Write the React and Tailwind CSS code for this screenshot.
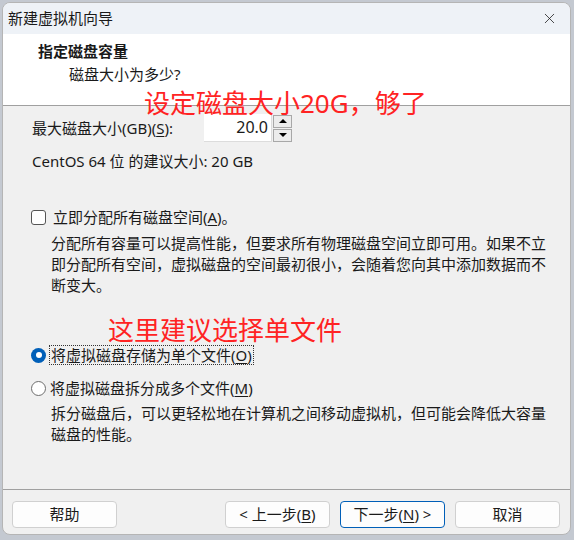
import { X } from 'lucide-react';

const U = ({ children }) => <span className="underline underline-offset-2">{children}</span>;

const Radio = ({ checked }) =>
  checked ? (
    <span className="w-[15px] h-[15px] rounded-full bg-[#005fb8] flex items-center justify-center shrink-0">
      <span className="w-[6px] h-[6px] rounded-full bg-white" />
    </span>
  ) : (
    <span className="w-[15px] h-[15px] rounded-full border border-[#6e6e6e] bg-white shrink-0" />
  );

const Btn = ({ children, primary }) => (
  <button
    className={
      primary
        ? 'w-[105px] h-[27px] rounded-[4px] border border-[#005fb8] bg-[#fdfdfd] text-[15px] text-[#1a1a1a] flex items-center justify-center'
        : 'w-[105px] h-[27px] rounded-[4px] border border-[#d0d0d0] bg-[#fdfdfd] text-[15px] text-[#1a1a1a] flex items-center justify-center'
    }
  >
    {children}
  </button>
);

export default function App() {
  return (
    <div
      className="w-[574px] h-[540px] bg-[#c4c9d1] pt-[2px] pl-[2px] overflow-hidden"
      style={{ fontFamily: '"Noto Sans", "Noto Sans CJK SC", sans-serif' }}
    >
      <div className="relative w-[569px] h-[533px] flex flex-col border border-[#b5b5b5] rounded-[8px] overflow-hidden bg-[#f0f0f0] text-[#1a1a1a]">
        {/* title bar */}
        <div className="h-[31px] bg-[#eef2f7] flex items-center justify-between pl-[5px] pr-[12px] shrink-0">
          <span className="text-[15px] leading-none">新建虚拟机向导</span>
          <X size={17} strokeWidth={1.1} className="text-[#1a1a1a]" />
        </div>

        {/* header */}
        <div className="h-[72px] bg-white border-b border-[#a0a0a0] shrink-0 pl-[35px] pt-[7px]">
          <p className="text-[15px] font-bold leading-[21px]">指定磁盘容量</p>
          <p className="text-[15px] leading-[21px] mt-[2px] pl-[31px]">磁盘大小为多少?</p>
        </div>

        {/* body */}
        <div className="flex-1 pl-[28px] pt-[8px] text-[15px] leading-[21px]">
          <div className="flex items-center h-[28px]">
            <span className="w-[173px] pl-[1px]">
              最大磁盘大小(GB)(<U>S</U>):
            </span>
            <div className="w-[68px] h-[28px] bg-white border-b border-r border-[#dcdcdc] flex items-center justify-end pr-[3px] text-[16px]">
              20.0
            </div>
            <div className="ml-[1px] flex flex-col gap-[1px]">
              <span className="w-[19px] h-[13px] border border-[#a8a8a8] bg-[#ececec] flex items-center justify-center">
                <span className="w-0 h-0 border-l-[4px] border-r-[4px] border-b-[4px] border-l-transparent border-r-transparent border-b-black" />
              </span>
              <span className="w-[19px] h-[13px] border border-[#a8a8a8] bg-[#ececec] flex items-center justify-center">
                <span className="w-0 h-0 border-l-[4px] border-r-[4px] border-t-[4px] border-l-transparent border-r-transparent border-t-black" />
              </span>
            </div>
          </div>

          <p className="mt-[9px] pl-[1px]">CentOS 64 位 的建议大小: 20 GB</p>

          <div className="flex items-center mt-[35px] gap-[7px]">
            <span className="w-[15px] h-[15px] rounded-[3px] border border-[#555] bg-white shrink-0" />
            <span>
              立即分配所有磁盘空间(<U>A</U>)。
            </span>
          </div>
          <p className="mt-[5px] pl-[20px] pr-[18px]">
            分配所有容量可以提高性能，但要求所有物理磁盘空间立即可用。如果不立即分配所有空间，虚拟磁盘的空间最初很小，会随着您向其中添加数据而不断变大。
          </p>

          <div className="flex items-center mt-[49px] gap-[3px]">
            <Radio checked />
            <span className="border border-dotted border-[#333] px-[1px] leading-[18px]">
              将虚拟磁盘存储为单个文件(<U>O</U>)
            </span>
          </div>
          <div className="flex items-center mt-[13px] gap-[4px]">
            <Radio />
            <span>
              将虚拟磁盘拆分成多个文件(<U>M</U>)
            </span>
          </div>
          <p className="mt-[4px] pl-[20px] pr-[18px]">
            拆分磁盘后，可以更轻松地在计算机之间移动虚拟机，但可能会降低大容量磁盘的性能。
          </p>
        </div>

        {/* footer */}
        <div className="h-[45px] border-t border-[#a0a0a0] shrink-0 flex items-start pt-[11px] pl-[9px] pr-[10px]">
          <Btn>帮助</Btn>
          <div className="flex-1" />
          <div className="flex gap-[10px]">
            <Btn>
              &lt; 上一步(<U>B</U>)
            </Btn>
            <Btn primary>
              下一步(<U>N</U>) &gt;
            </Btn>
            <Btn>取消</Btn>
          </div>
        </div>

        {/* annotations */}
        <span className="absolute left-[141px] top-[87px] text-[26px] leading-[26px] text-[#ff2323] whitespace-nowrap">
          设定磁盘大小20G，够了
        </span>
        <span className="absolute left-[105px] top-[314px] text-[26px] leading-[26px] text-[#ff2323] whitespace-nowrap">
          这里建议选择单文件
        </span>
      </div>
    </div>
  );
}
